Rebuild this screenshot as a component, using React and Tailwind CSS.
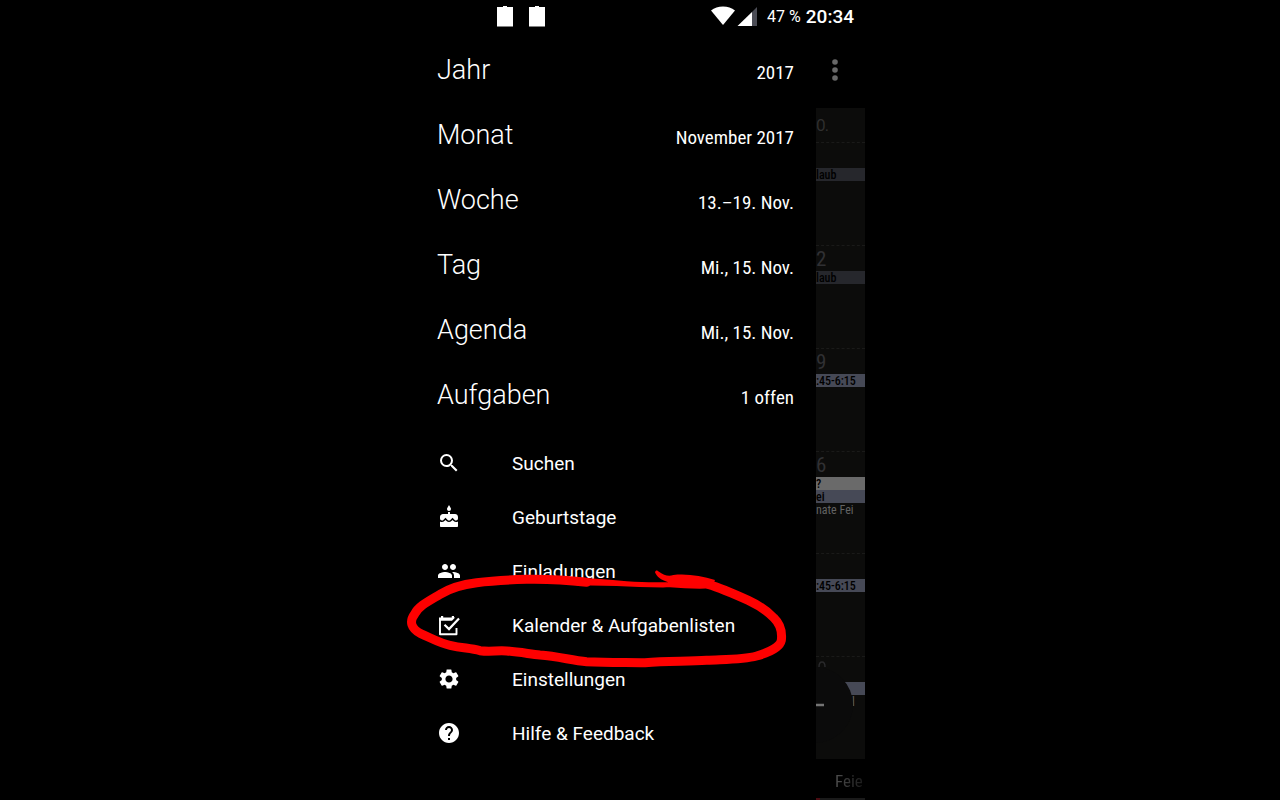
import React from 'react';
import { MdSearch, MdCake, MdPeople, MdSettings, MdHelp } from 'react-icons/md';

const views = [
  ['Jahr', '2017'],
  ['Monat', 'November 2017'],
  ['Woche', '13.–19. Nov.'],
  ['Tag', 'Mi., 15. Nov.'],
  ['Agenda', 'Mi., 15. Nov.'],
  ['Aufgaben', '1 offen'],
];

function CalendarCheckIcon({ className }) {
  return (
    <svg viewBox="0 0 24 24" className={className} fill="none" stroke="currentColor" strokeWidth="1.900" strokeLinejoin="round" aria-hidden="true">
      <path d="M19.500 15v6.200H3V6" />
      <path d="M2 4.500h2V3h2.200v1.500h8.600V3H17v1.500h1.200L15 7.800H2z" fill="currentColor" stroke="none" />
      <path d="M7.500 11.800l4.500 4.300L22 5.500" strokeWidth="2.200" strokeLinejoin="miter" />
    </svg>
  );
}

const actions = [
  ['Suchen', MdSearch],
  ['Geburtstage', MdCake],
  ['Einladungen', MdPeople],
  ['Kalender & Aufgabenlisten', CalendarCheckIcon, true],
  ['Einstellungen', MdSettings],
  ['Hilfe & Feedback', MdHelp],
];

function Battery() {
  return (
    <svg viewBox="0 0 16 21" className="h-[21px] w-4" fill="#fff" aria-hidden="true">
      <path d="M0 1h6V0h4v1h6v19.500H0z" />
    </svg>
  );
}

function StatusBar() {
  return (
    <header className="flex h-[34px] items-center pr-[11px] pl-[82px]">
      <div className="flex gap-4 pb-[2px]">
        <Battery />
        <Battery />
      </div>
      <div className="ml-auto flex items-center">
        <svg viewBox="0 0 46 20" className="mr-[10px] mb-[2px] h-5 w-[46px]" aria-hidden="true">
          <path d="M0 4.500Q5 .5 12 .5T24 4.500L12 19z" fill="#fff" />
          <path d="M46 1v19H41V6z" fill="#4b4c55" />
          <path d="M41 6v14H26.500z" fill="#fff" />
        </svg>
        <span className="mr-[5px] text-[16px]">47 %</span>
        <span className="text-[19px] font-medium">20:34</span>
      </div>
    </header>
  );
}

function Marker() {
  return (
    <svg viewBox="0 0 1200 390" className="pointer-events-none absolute -top-[49px] -left-[15px] h-[130px] w-[400px] max-w-none" aria-hidden="true">
      <path
        d="M560 100C480 91 430 90 380 91C310 93 270 96 230 101C180 107 150 117 120 136C85 157 55 172 44 195C27 218 33 238 62 254C95 268 120 283 150 289C190 298 210 297 240 305C270 309 290 304 320 306C360 309 390 315 420 318C475 322 515 334 560 338C620 341 670 340 735 341C800 335 860 338 920 334C980 331 1030 332 1070 321C1110 310 1140 293 1144 274C1147 248 1142 226 1122 207C1100 184 1075 168 1045 154C1005 136 965 118 925 106"
        fill="none"
        stroke="#fe0000"
        strokeWidth="27"
        strokeLinecap="round"
        strokeLinejoin="round"
      />
      <path
        d="M520 84C570 89 625 90 680 97C725 101 770 100 805 100C782 93 770 83 765 70C767 62 772 63 778 69C791 78 805 83 820 78C860 73 905 81 945 93L935 118C895 121 850 118 810 115C760 116 700 113 650 111L530 109z"
        fill="#fe0000"
      />
    </svg>
  );
}

function Drawer() {
  return (
    <nav aria-label="Ansichten" className="min-w-0 flex-1">
      <ul className="pt-1">
        {views.map(([name, detail]) => (
          <li key={name}>
            <button className="flex h-[65px] w-full items-center justify-between pr-[22px] pl-[22px] text-left">
              <span className="text-[27px] font-light">{name}</span>
              <span className="pt-[6px] font-['Roboto_Condensed','Roboto',sans-serif] text-[19px]">{detail}</span>
            </button>
          </li>
        ))}
      </ul>
      <ul className="pt-2">
        {actions.map(([name, Icon, marked]) => (
          <li key={name} className="relative">
            <button className="flex h-[54px] w-full items-center gap-[51px] pl-[22px] text-left text-[19px]">
              <Icon className="h-6 w-6 shrink-0" />
              <span className="pt-[3px]">{name}</span>
            </button>
            {marked && <Marker />}
          </li>
        ))}
      </ul>
    </nav>
  );
}

function Entry({ children, className }) {
  return <div className={`h-[13px] overflow-hidden whitespace-nowrap text-[12px] leading-[14px] ${className}`}>{children}</div>;
}

function Day({ number, children }) {
  return (
    <div className="overflow-hidden border-t border-dashed border-[#1a1a19]">
      <div className="h-[25px] text-[21px] leading-[27px] text-[#303033]">{number}</div>
      {children}
    </div>
  );
}

function CalendarEdge() {
  return (
    <aside className="flex w-[49px] shrink-0 flex-col overflow-hidden font-['Roboto_Condensed','Roboto',sans-serif]">
      <button aria-label="Menü" className="flex h-[74px] flex-col items-start pt-[25px] pl-4">
        <svg viewBox="0 0 6 22" className="h-[22px] w-[6px]" fill="#686868" aria-hidden="true">
          <circle cx="3" cy="3" r="2.800" />
          <circle cx="3" cy="11" r="2.800" />
          <circle cx="3" cy="19" r="2.800" />
        </svg>
      </button>
      <div className="relative bg-[#0c0c0b]">
        <div className="h-[34px] text-[16px] leading-[36px] text-[#303030]">O.</div>
        <div className="grid h-[617px] grid-rows-6">
          <Day>
            <Entry className="bg-[#26272c] font-medium text-black">laub</Entry>
          </Day>
          <Day number="2">
            <Entry className="bg-[#26272c] font-medium text-black">laub</Entry>
          </Day>
          <Day number="9">
            <Entry className="bg-[#464956] font-medium text-black">:45-6:15</Entry>
          </Day>
          <Day number="6">
            <Entry className="bg-[#6a6a6a] font-medium text-black">?</Entry>
            <Entry className="bg-[#464956] font-medium text-black">ei</Entry>
            <Entry className="text-[#626262]">nate Fei</Entry>
          </Day>
          <Day>
            <Entry className="bg-[#464956] font-medium text-black">:45-6:15</Entry>
          </Day>
          <Day>
            <Entry className="bg-[#464956]" />
            <Entry className="pl-9 text-[#626262]">l</Entry>
          </Day>
        </div>
        <svg viewBox="0 0 49 110" className="absolute bottom-0 left-0 h-[110px] w-[49px]" aria-hidden="true">
          <circle cx="-1" cy="56" r="38" fill="#0b0b0b" />
          <path d="M3 18Q3 13 6 13T9 18" fill="none" stroke="#29292b" strokeWidth="1.500" />
          <path d="M0 56h8" stroke="#747474" strokeWidth="2.500" />
        </svg>
      </div>
      <div className="flex h-[41px] flex-col justify-between pl-[19px]">
        <span className="bg-gradient-to-r from-[#505050] to-[#181818] bg-clip-text pt-[10px] text-[17px] leading-[24px] text-transparent">Feie</span>
        <span className="-ml-[19px] h-[2px] border-l-4 border-[#4a0c12] bg-[#1a1a1a]" />
      </div>
    </aside>
  );
}

export default function App() {
  return (
    <div className="min-h-screen bg-black font-['Roboto',sans-serif] text-white">
      <main className="mx-auto w-full max-w-[450px]">
        <StatusBar />
        <div className="flex">
          <Drawer />
          <CalendarEdge />
        </div>
      </main>
    </div>
  );
}
